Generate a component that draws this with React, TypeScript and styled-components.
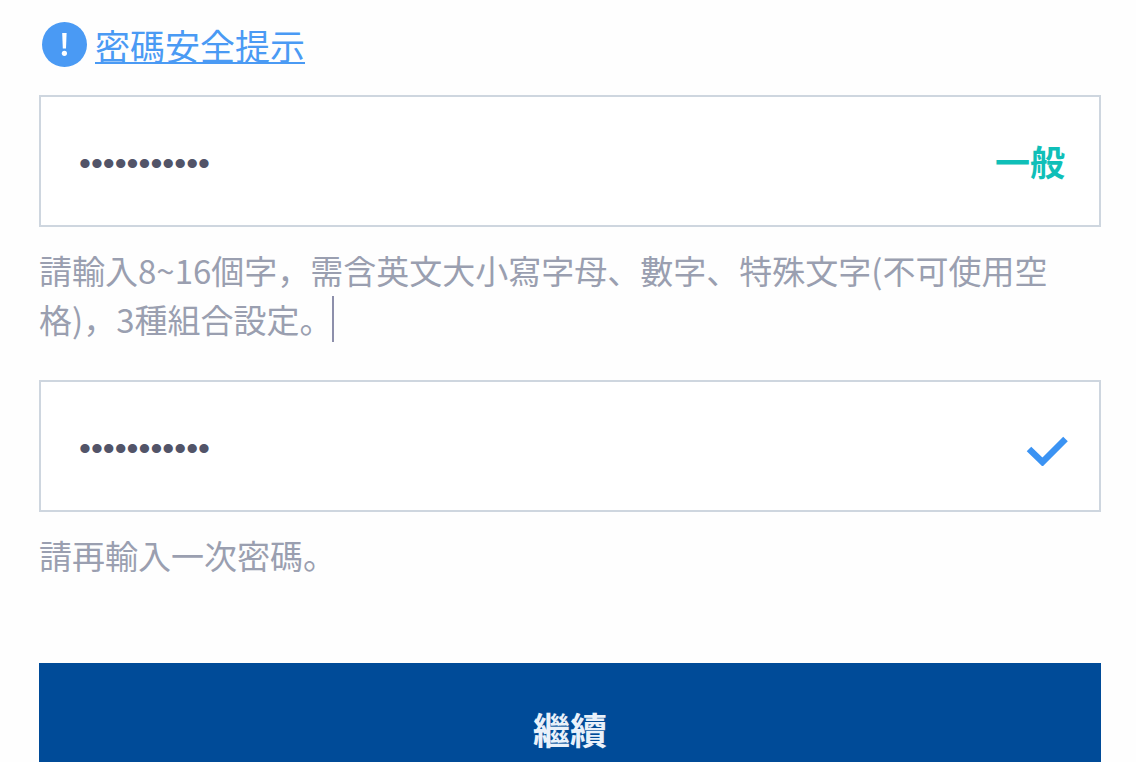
import React, { useState } from "react";
import styled, { createGlobalStyle } from "styled-components";

const GlobalStyle = createGlobalStyle`
  *, *::before, *::after { box-sizing: border-box; }
  html { scrollbar-width: none; }
  body {
    margin: 0;
    background: #fefefe;
    font-family: "Noto Sans CJK JP", "Noto Sans CJK TC", sans-serif;
  }
`;

const Form = styled.form`
  display: flex;
  flex-direction: column;
  padding: 20px 35px 0 39px;
`;

const TipRow = styled.div`
  display: flex;
  align-items: center;
  gap: 8px;
  height: 48px;
  padding-left: 3px;
  margin-bottom: 27px;
`;

const TipIcon = styled.svg`
  flex: none;
  width: 45px;
  height: 45px;
`;

const TipLink = styled.a`
  color: #4a9af4;
  font-size: 35px;
  line-height: 48px;
  padding-top: 2px;
  text-decoration: underline;
  text-decoration-thickness: 2px;
  text-underline-offset: 2px;
  text-decoration-skip-ink: none;
`;

const Field = styled.div<{ $end: number }>`
  display: flex;
  align-items: center;
  height: 132px;
  padding: 0 ${(p) => p.$end}px 0 38px;
  border: 2px solid #ced6df;
  background: #fff;
`;

const PasswordInput = styled.input`
  flex: 1;
  min-width: 0;
  height: 100%;
  padding: 5px 0 0;
  border: 0;
  outline: 0;
  background: transparent;
  color: #525468;
  font-family: "Liberation Sans", Arial, sans-serif;
  font-size: 34px;
`;

const Strength = styled.output`
  color: #0fbfb8;
  font-size: 35px;
  font-weight: 700;
  line-height: 48px;
`;

const CheckIcon = styled.svg`
  flex: none;
  width: 44px;
  height: 40px;
`;

const Hint = styled.label<{ $gap: number }>`
  display: block;
  margin: 19px 0 ${(p) => p.$gap}px;
  color: #9a9fb0;
  font-size: 33px;
  line-height: 49px;
`;

const Caret = styled.span`
  display: inline-block;
  width: 2px;
  height: 46px;
  margin: 0 0 2px;
  background: #8d8fab;
  vertical-align: bottom;
`;

const Submit = styled.button`
  height: 132px;
  border: 0;
  background: #004b98;
  color: #e9f1fa;
  font-family: inherit;
  font-size: 37px;
  font-weight: 700;
`;

export default function App() {
  const [password, setPassword] = useState("Secure#2024");
  const [confirm, setConfirm] = useState("Secure#2024");

  return (
    <>
      <GlobalStyle />
      <Form onSubmit={(e) => e.preventDefault()}>
        <TipRow>
          <TipIcon viewBox="0 0 45 45" aria-hidden="true">
            <circle cx="22.5" cy="22.5" r="22.5" fill="#4a9af4" />
            <path d="M20.2 11h4.400l-.6 15.500h-3.200z" fill="#fff" />
            <circle cx="22.400" cy="31.300" r="2.600" fill="#fff" />
          </TipIcon>
          <TipLink href="#tips">密碼安全提示</TipLink>
        </TipRow>

        <Field $end={34}>
          <PasswordInput
            id="password"
            type="password"
            autoComplete="new-password"
            value={password}
            onChange={(e) => setPassword(e.target.value)}
          />
          <Strength htmlFor="password">一般</Strength>
        </Field>
        <Hint htmlFor="password" $gap={36}>
          請輸入8~16個字，需含英文大小寫字母、數字、特殊文字(不可使用空格)，3種組合設定。
          <Caret />
        </Hint>

        <Field $end={30}>
          <PasswordInput
            id="confirm"
            type="password"
            autoComplete="new-password"
            value={confirm}
            onChange={(e) => setConfirm(e.target.value)}
          />
          <CheckIcon viewBox="0 0 44 40" aria-hidden="true">
            <path
              d="M4 23L17.500 36L40.500 13"
              fill="none"
              stroke="#3b93f3"
              strokeWidth="6.500"
            />
          </CheckIcon>
        </Field>
        <Hint htmlFor="confirm" $gap={83}>
          請再輸入一次密碼。
        </Hint>

        <Submit type="submit">繼續</Submit>
      </Form>
    </>
  );
}
